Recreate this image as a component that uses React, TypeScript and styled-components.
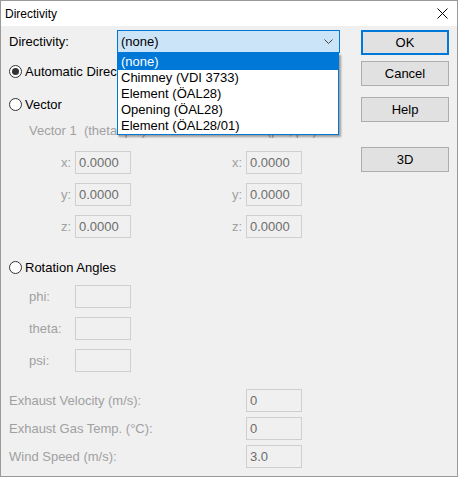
import React from "react";
import styled, { createGlobalStyle } from "styled-components";

const Global = createGlobalStyle`
  html, body { margin: 0; padding: 0; background: #ffffff; }
  body { font-family: "Liberation Sans", Arial, sans-serif; }
`;

const Window = styled.div`
  box-sizing: border-box;
  width: 458px;
  height: 477px;
  border: 1px solid #9a9a9a;
  background: #f0f0f0;
  display: flex;
  flex-direction: column;
  font-family: "Liberation Sans", Arial, sans-serif;
  font-size: 13px;
  color: #000;
`;

const TitleBar = styled.div`
  height: 25px;
  background: #ffffff;
  display: flex;
  align-items: center;
  justify-content: space-between;
  padding: 0 8px 0 4px;
  font-size: 12px;
`;

const CloseGlyph = styled.svg`
  width: 11px;
  height: 11px;
  margin-right: 1px;
`;

const Body = styled.div`
  flex: 1;
  display: flex;
  padding: 4px 0 0 8px;
`;

const Main = styled.div`
  width: 331px;
  display: flex;
  flex-direction: column;
`;

const Buttons = styled.div`
  margin-left: 21px;
  width: 88px;
  display: flex;
  flex-direction: column;
`;

const Button = styled.div<{ $gap: number; $default?: boolean }>`
  box-sizing: border-box;
  height: 25px;
  margin-top: ${(p) => p.$gap}px;
  background: #e1e1e1;
  border: ${(p) => (p.$default ? "2px solid #0078d7" : "1px solid #adadad")};
  display: flex;
  align-items: center;
  justify-content: center;
  font-size: 13px;
`;

const DirRow = styled.div`
  display: flex;
  align-items: center;
  height: 23px;
`;

const DirLabel = styled.span`
  width: 108px;
`;

const ComboWrap = styled.div`
  position: relative;
  width: 223px;
  height: 23px;
`;

const Combo = styled.div`
  box-sizing: border-box;
  height: 23px;
  background: #cce4f7;
  border: 1px solid #0078d7;
  display: flex;
  align-items: center;
  justify-content: space-between;
  padding: 0 6px 0 3px;
`;

const Chevron = styled.svg`
  width: 9px;
  height: 5px;
`;

const DropList = styled.div`
  position: absolute;
  top: 23px;
  left: 0;
  width: 222px;
  box-sizing: border-box;
  border: 1px solid #0078d7;
  background: #ffffff;
  box-shadow: 2px 2px 2px rgba(0, 0, 0, 0.35);
  z-index: 5;
`;

const DropItem = styled.div<{ $active?: boolean }>`
  height: 16px;
  line-height: 16px;
  padding-left: 3px;
  white-space: nowrap;
  background: ${(p) => (p.$active ? "#0078d7" : "transparent")};
  color: ${(p) => (p.$active ? "#ffffff" : "#000")};
`;

const RadioRow = styled.div<{ $gap: number }>`
  display: flex;
  align-items: center;
  height: 16px;
  margin-top: ${(p) => p.$gap}px;
  white-space: nowrap;
`;

const RadioCircle = styled.span<{ $on?: boolean }>`
  box-sizing: border-box;
  width: 13px;
  height: 13px;
  border-radius: 50%;
  border: 1px solid #333;
  background: #fff;
  margin: 0 3px 0 0;
  display: inline-flex;
  align-items: center;
  justify-content: center;
  &::after {
    content: "";
    width: 7px;
    height: 7px;
    border-radius: 50%;
    background: ${(p) => (p.$on ? "#333" : "transparent")};
  }
`;

const VectorHeads = styled.div`
  display: flex;
  height: 16px;
  align-items: center;
  margin-top: 10px;
  color: #a0a0a0;
  white-space: nowrap;
`;

const Head = styled.span<{ $width: number }>`
  width: ${(p) => p.$width}px;
  padding-left: 20px;
  box-sizing: border-box;
`;

const VectorGrid = styled.div`
  display: grid;
  grid-template-columns: 171px 160px;
  row-gap: 9px;
  margin-top: 13px;
`;

const AxisCell = styled.div`
  display: flex;
  align-items: center;
  justify-content: flex-end;
  width: 122px;
`;

const AxisLabel = styled.span`
  color: #a0a0a0;
  margin-right: 4px;
`;

const Field = styled.div<{ $width?: number }>`
  box-sizing: border-box;
  width: ${(p) => p.$width ?? 56}px;
  height: 23px;
  border: 1px solid #cfcfcf;
  background: #f0f0f0;
  color: #6d6d6d;
  display: flex;
  align-items: center;
  padding-left: 3px;
`;

const AngleList = styled.div`
  display: flex;
  flex-direction: column;
  gap: 9px;
  margin-top: 10px;
`;

const AngleRow = styled.div`
  display: flex;
  align-items: center;
`;

const AngleLabel = styled.span`
  box-sizing: border-box;
  width: 66px;
  padding-left: 20px;
  color: #a0a0a0;
`;

const ExhaustList = styled.div`
  display: flex;
  flex-direction: column;
  gap: 5px;
  margin-top: 17px;
`;

const ExhaustRow = styled.div`
  display: flex;
  align-items: center;
`;

const ExhaustLabel = styled.span`
  width: 237px;
  color: #a0a0a0;
`;

const directivities = [
  "(none)",
  "Chimney (VDI 3733)",
  "Element (ÖAL28)",
  "Opening (ÖAL28)",
  "Element (ÖAL28/01)",
];

const axes = ["x", "y", "z"];
const angles = ["phi", "theta", "psi"];
const exhaust = [
  { label: "Exhaust Velocity (m/s):", value: "0" },
  { label: "Exhaust Gas Temp. (°C):", value: "0" },
  { label: "Wind Speed (m/s):", value: "3.0" },
];

export default function App() {
  return (
    <>
      <Global />
      <Window>
        <TitleBar>
          <span>Directivity</span>
          <CloseGlyph viewBox="0 0 11 11">
            <path d="M0.5 0.5 L10.5 10.5 M10.5 0.5 L0.5 10.5" stroke="#000" strokeWidth="1" fill="none" />
          </CloseGlyph>
        </TitleBar>
        <Body>
          <Main>
            <DirRow>
              <DirLabel>Directivity:</DirLabel>
              <ComboWrap>
                <Combo>
                  <span>(none)</span>
                  <Chevron viewBox="0 0 9 5">
                    <path d="M0.5 0.5 L4.5 4.5 L8.5 0.5" stroke="#444" strokeWidth="1" fill="none" />
                  </Chevron>
                </Combo>
                <DropList>
                  {directivities.map((d, i) => (
                    <DropItem key={d} $active={i === 0}>
                      {d}
                    </DropItem>
                  ))}
                </DropList>
              </ComboWrap>
            </DirRow>

            <RadioRow $gap={10}>
              <RadioCircle $on />
              Automatic Directivity
            </RadioRow>
            <RadioRow $gap={17}>
              <RadioCircle />
              Vector
            </RadioRow>

            <VectorHeads>
              <Head $width={183}>Vector 1&nbsp; (theta, phi)</Head>
              <Head $width={148}>Vector 2&nbsp; (phi, psi)</Head>
            </VectorHeads>

            <VectorGrid>
              {axes.map((a) => (
                <React.Fragment key={a}>
                  <AxisCell>
                    <AxisLabel>{a}:</AxisLabel>
                    <Field>0.0000</Field>
                  </AxisCell>
                  <AxisCell>
                    <AxisLabel>{a}:</AxisLabel>
                    <Field>0.0000</Field>
                  </AxisCell>
                </React.Fragment>
              ))}
            </VectorGrid>

            <RadioRow $gap={21}>
              <RadioCircle />
              Rotation Angles
            </RadioRow>

            <AngleList>
              {angles.map((a) => (
                <AngleRow key={a}>
                  <AngleLabel>{a}:</AngleLabel>
                  <Field />
                </AngleRow>
              ))}
            </AngleList>

            <ExhaustList>
              {exhaust.map((e) => (
                <ExhaustRow key={e.label}>
                  <ExhaustLabel>{e.label}</ExhaustLabel>
                  <Field>{e.value}</Field>
                </ExhaustRow>
              ))}
            </ExhaustList>
          </Main>

          <Buttons>
            <Button $gap={0} $default>OK</Button>
            <Button $gap={6}>Cancel</Button>
            <Button $gap={11}>Help</Button>
            <Button $gap={25}>3D</Button>
          </Buttons>
        </Body>
      </Window>
    </>
  );
}
